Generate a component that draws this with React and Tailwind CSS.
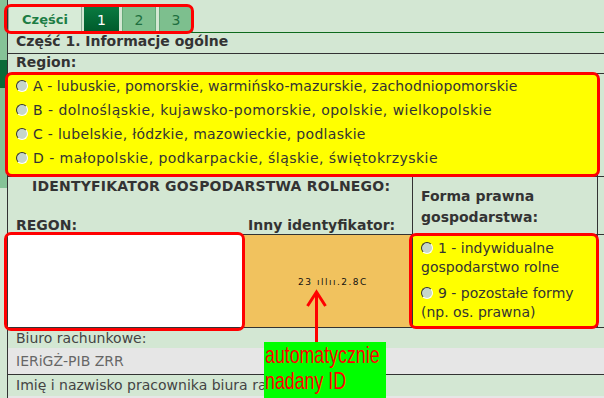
import React from "react";

function Radio() {
  return (
    <span className="inline-block shrink-0 w-[12px] h-[12px] rounded-full bg-[#c6d6ca] border-[1.5px] border-t-[#333] border-l-[#333] border-r-white border-b-white" />
  );
}

export default function App() {
  return (
    <div className="relative w-[604px] h-[398px] overflow-hidden bg-[#d3e7d3] flex font-['DejaVu_Sans',Verdana,sans-serif] text-[14px] text-[#333]">
      {/* left strip */}
      <div className="w-[7px] shrink-0 flex flex-col">
        <div className="h-[60px] shrink-0 bg-[#86c397]" />
        <div className="h-[28px] shrink-0 bg-[#0b6b38]" />
        <div className="h-[100px] shrink-0 bg-[#86c397]" />
        <div className="flex-1" />
      </div>

      {/* main column */}
      <div className="flex-1 border-l border-[#333]">
        {/* tabs */}
        <div className="h-[33px] pt-[7px] border-b border-[#0d6a1c] flex items-stretch gap-[2px]">
          <div className="w-[74px] bg-[#d7ebd7] border-x border-[#8fae98] flex items-center justify-center font-bold text-[13px] text-[#1d7d45] leading-none">
            Części
          </div>
          <div className="w-[35px] bg-gradient-to-b from-[#0a7a40] to-[#005a2b] flex items-center justify-center text-white leading-none">
            1
          </div>
          <div className="w-[34px] ml-[1px] bg-[#7dbf8e] border-x border-[#64a977] flex items-center justify-center text-[#1f6f3f] leading-none">
            2
          </div>
          <div className="w-[34px] ml-[1px] bg-[#7dbf8e] border-x border-[#64a977] flex items-center justify-center text-[#1f6f3f] leading-none">
            3
          </div>
        </div>

        {/* Część 1 */}
        <div className="h-[21px] border-b border-[#333] pl-[8px] font-bold leading-[17px]">
          Część 1. Informacje ogólne
        </div>
        {/* Region */}
        <div className="h-[19px] pl-[8px] font-bold leading-[17px]">Region:</div>

        {/* Region options */}
        <div className="flex border-y border-[#333]">
          <div className="w-[590px] border-r border-[#333] bg-[#ffff00] pb-[6px] text-[#333]">
            <div className="h-[24px] flex items-center gap-[5px] pl-[8px] leading-[17px]">
              <Radio />
              <span className="tracking-[0.08px]">A - lubuskie, pomorskie, warmińsko-mazurskie, zachodniopomorskie</span>
            </div>
            <div className="h-[24px] flex items-center gap-[5px] pl-[8px] leading-[17px]">
              <Radio />
              <span className="tracking-[0.47px]">B - dolnośląskie, kujawsko-pomorskie, opolskie, wielkopolskie</span>
            </div>
            <div className="h-[24px] flex items-center gap-[5px] pl-[8px] leading-[17px]">
              <Radio />
              <span className="tracking-[0.3px]">C - lubelskie, łódzkie, mazowieckie, podlaskie</span>
            </div>
            <div className="h-[24px] flex items-center gap-[5px] pl-[8px] leading-[17px]">
              <Radio />
              <span className="tracking-[0.46px]">D - małopolskie, podkarpackie, śląskie, świętokrzyskie</span>
            </div>
          </div>
          <div className="flex-1" />
        </div>

        {/* header row */}
        <div className="flex border-b border-[#333]">
          <div className="w-[590px] border-r border-[#333] flex">
            <div className="w-[405px] h-[57px] border-r border-[#333] flex flex-col justify-between font-bold">
              <div className="pl-[24px] leading-[18px] tracking-[0.2px]">IDENTYFIKATOR GOSPODARSTWA ROLNEGO:</div>
              <div className="flex leading-[17px]">
                <div className="w-[236px] pl-[8px]">REGON:</div>
                <div className="pl-[4px]">Inny identyfikator:</div>
              </div>
            </div>
            <div className="flex-1 pl-[8px] pt-[9px] font-bold leading-[21px]">
              Forma prawna
              <br />
              gospodarstwa:
            </div>
          </div>
          <div className="flex-1" />
        </div>

        {/* data row */}
        <div className="flex border-b border-[#333]">
          <div className="w-[590px] h-[92px] border-r border-[#333] flex">
            <div className="w-[236px] bg-white" />
            <div className="w-[169px] bg-[#f1c25e] border-r border-[#333] flex items-center justify-center pl-[10px] pt-[3px]">
              <span className="text-[9px] tracking-[1.5px] text-[#111] leading-none">
                23 ıllıı.2.8C
              </span>
            </div>
            <div className="flex-1 bg-[#ffff00] pl-[8px] pt-[4px] pr-[2px] leading-[19px] flex flex-col gap-[7px]">
              <div>
                <span className="inline-flex items-center align-[-1px] mr-[5px]">
                  <Radio />
                </span>
                1 - indywidualne gospodarstwo rolne
              </div>
              <div>
                <span className="inline-flex items-center align-[-1px] mr-[5px]">
                  <Radio />
                </span>
                9 - pozostałe formy (np. os. prawna)
              </div>
            </div>
          </div>
          <div className="flex-1" />
        </div>

        {/* Biuro */}
        <div className="h-[20px] pl-[8px] leading-[20px] text-[#444]">Biuro rachunkowe:</div>
        <div className="h-[27px] bg-[#e6e6e6] border-b border-[#333] pl-[8px] flex items-center leading-[17px] text-[#666]">
          IERiGŻ-PIB ZRR
        </div>
        <div className="h-[21px] pl-[8px] pt-[2px] leading-[17px] text-[#444] whitespace-nowrap">
          Imię i nazwisko pracownika biura rachunkowego:
        </div>
        <div className="h-[10px] bg-[#e6e6e6]" />
      </div>

      {/* annotations */}
      <div className="absolute left-[4px] top-[4px] w-[190px] h-[30px] border-[3px] border-[#ff0000] rounded-[7px] pointer-events-none" />
      <div className="absolute left-[5px] top-[72px] w-[595px] h-[105px] border-[3px] border-[#ff0000] rounded-[7px] pointer-events-none" />
      <div className="absolute left-[4px] top-[232px] w-[241px] h-[99px] border-[3px] border-[#ff0000] rounded-[7px] pointer-events-none" />
      <div className="absolute left-[409px] top-[233px] w-[190px] h-[96px] border-[3px] border-[#ff0000] rounded-[7px] pointer-events-none" />

      <svg className="absolute left-[305px] top-[288px]" width="24" height="56" viewBox="0 0 24 56">
        <line x1="11.5" y1="4" x2="11.5" y2="56" stroke="#ff0000" strokeWidth="3" />
        <polyline points="2.5,18 11.5,4 20.5,18" fill="none" stroke="#ff0000" strokeWidth="3" />
      </svg>

      <div className="absolute left-[264px] top-[342px] w-[122px] h-[56px] bg-[#00ff00] pl-[1px] font-['Liberation_Sans',Arial,sans-serif] text-[24px] leading-[26px] text-[#ff0000]">
        <div className="origin-left scale-x-[0.74] whitespace-nowrap">automatycznie</div>
        <div className="origin-left scale-x-[0.74] whitespace-nowrap">nadany ID</div>
      </div>
    </div>
  );
}
